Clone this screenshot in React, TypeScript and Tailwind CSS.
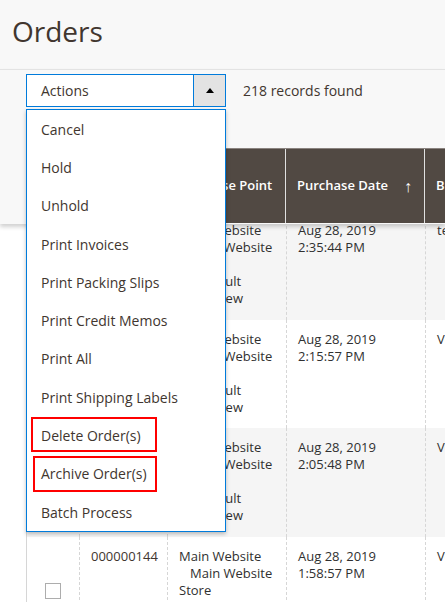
import React from 'react'

const actions = [
  'Cancel',
  'Hold',
  'Unhold',
  'Print Invoices',
  'Print Packing Slips',
  'Print Credit Memos',
  'Print All',
  'Print Shipping Labels',
  'Delete Order(s)',
  'Archive Order(s)',
  'Batch Process',
]

const rows = [
  { id: '000000147', time: '2:35:44 PM', name: 'test test', bg: 'bg-[#f5f5f5]' },
  { id: '000000146', time: '2:15:57 PM', name: 'Veronica Costello', bg: 'bg-white' },
  { id: '000000145', time: '2:05:48 PM', name: 'Veronica Costello', bg: 'bg-[#f5f5f5]' },
  { id: '000000144', time: '1:58:57 PM', name: 'Veronica Costello', bg: 'bg-white' },
]

const cols = 'grid grid-cols-[53px_88px_119px_139px_1fr]'

function Row({ row }: { row: (typeof rows)[number] }) {
  return (
    <div className={`${cols} ${row.bg} h-[108.5px] text-[13px] leading-[17px] text-[#303030]`}>
      <div className="flex items-center justify-center border-l border-[#d6d6d6]">
        <span className="block h-4 w-4 border border-[#adadad] bg-white" />
      </div>
      <div className="border-l border-dashed border-[#d6d6d6] pl-[11px] pt-[11px] text-[#41362f]">{row.id}</div>
      <div className="border-l border-dashed border-[#d6d6d6] pl-[11px] pt-[11px] whitespace-nowrap">
        <div>Main Website</div>
        <div className="pl-[11px]">Main Website</div>
        <div>Store</div>
        <div className="pl-[18px]">Default</div>
        <div>Store View</div>
      </div>
      <div className="border-l border-dashed border-[#d6d6d6] pl-[11px] pt-[11px]">
        <div>Aug 28, 2019</div>
        <div>{row.time}</div>
      </div>
      <div className="overflow-hidden whitespace-nowrap border-l border-dashed border-[#d6d6d6] pl-[11px] pt-[11px]">
        {row.name}
      </div>
    </div>
  )
}

export default function App() {
  return (
    <div className="relative h-[602px] w-[445px] overflow-hidden bg-white font-['Open_Sans',sans-serif]">
      {/* page title */}
      <div className="h-[69px] bg-[#f8f8f8] pl-[12px] pt-[14px]">
        <h1 className="text-[28px] leading-[34px] text-[#41362f]">Orders</h1>
      </div>

      {/* grid body, scrolled under the sticky header */}
      <div className="pt-[142px] pl-[26px]">
        {rows.map((r) => (
          <Row key={r.id} row={r} />
        ))}
      </div>

      {/* sticky header */}
      <div className="absolute left-0 right-0 top-[69px] z-10 h-[155px] border-t border-[#e3e3e3] bg-[#f8f8f8] shadow-[0_3px_4px_rgba(0,0,0,0.18)]">
        <div className="flex items-center pl-[26px] pt-[4px]">
          <div className="flex h-[33px] w-[200px] border border-[#007bdb] bg-white">
            <span className="flex flex-1 items-center pl-[14px] text-[14px] text-[#41362f]">Actions</span>
            <span className="flex w-[32px] items-center justify-center border-l border-[#007bdb] bg-[#e3e3e3]">
              <span className="block h-0 w-0 border-x-[4px] border-b-[5px] border-x-transparent border-b-black" />
            </span>
          </div>
          <span className="pl-[17px] text-[14px] text-[#41362f]">218 records found</span>
        </div>

        <div className={`${cols} ml-[26px] mt-[41px] h-[75px] border-t border-[#8a837f] bg-[#514943] text-[13px] font-semibold text-white`}>
          <div className="border-r border-[#e0e0e0]" />
          <div className="flex items-center border-r border-[#e0e0e0] pl-[11px]">ID</div>
          <div className="flex items-center whitespace-nowrap border-r border-[#e0e0e0] pl-[11px]">Purchase Point</div>
          <div className="flex items-center justify-between border-r border-[#e0e0e0] pl-[11px] pr-[12px]">
            <span>Purchase Date</span>
            <span className="text-[16px] font-light">↑</span>
          </div>
          <div className="flex items-center whitespace-nowrap pl-[11px]">Bill-to Name</div>
        </div>
      </div>

      {/* open actions dropdown */}
      <div className="absolute left-[26px] top-[109px] z-20 w-[200px] border border-[#007bdb] bg-white shadow-[0_2px_4px_rgba(0,0,0,0.25)]">
        {actions.map((a) => (
          <div key={a} className="flex h-[38.3px] items-center pl-[14px] text-[14px] text-[#41362f]">
            {a}
          </div>
        ))}
        <span className="absolute left-[4px] top-[307px] h-[35px] w-[126px] border-2 border-[#ff0000]" />
        <span className="absolute left-[6px] top-[346px] h-[36px] w-[124px] border-2 border-[#ff0000]" />
      </div>
    </div>
  )
}
